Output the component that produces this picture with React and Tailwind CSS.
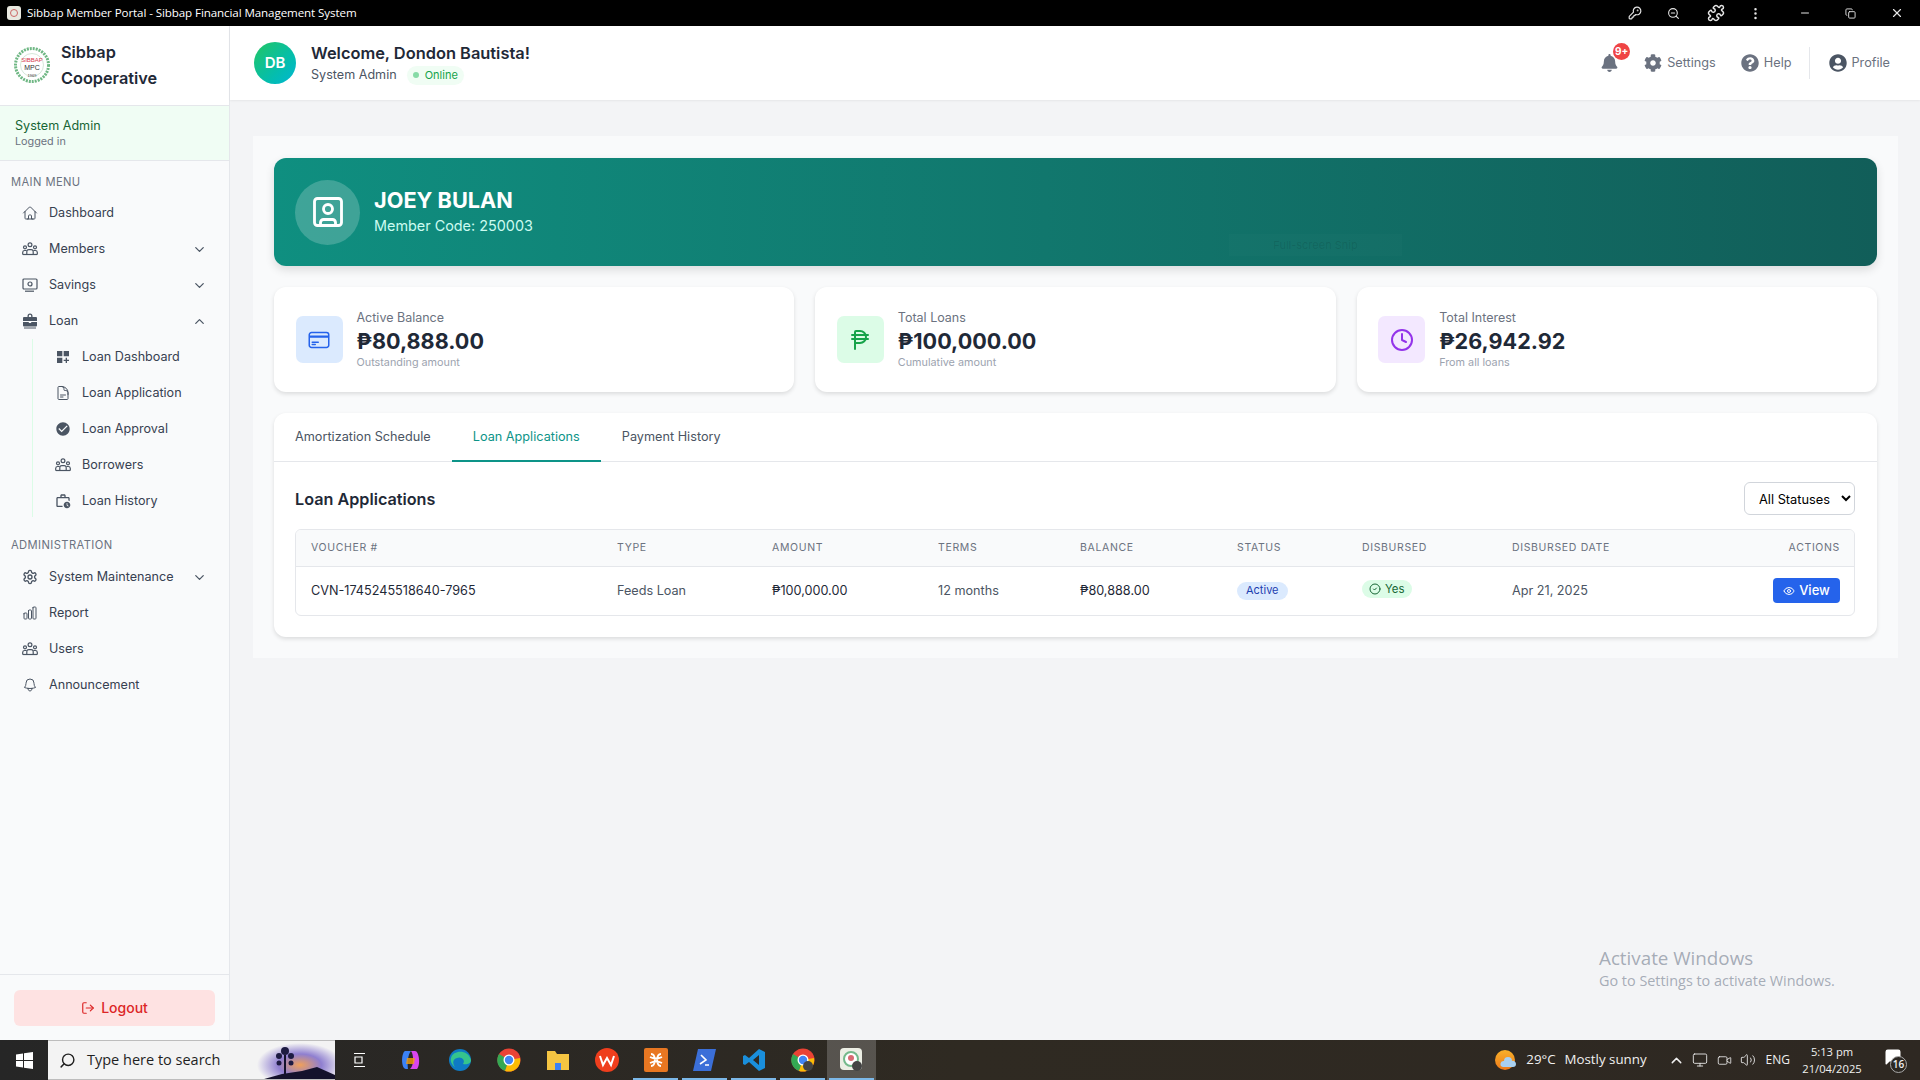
import React from "react";
import { HiOutlineHome, HiOutlineDocumentText, HiOutlineChartBar, HiOutlineBell, HiOutlineCreditCard } from "react-icons/hi2";
import { MdDashboardCustomize, MdCheckCircle, MdOutlineWorkHistory } from "react-icons/md";
import { FaBell, FaCog, FaQuestionCircle, FaUserCircle } from "react-icons/fa";
import { LuSquareUser, LuPhilippinePeso, LuClock, LuCircleCheck, LuEye, LuLogOut, LuChevronDown, LuChevronUp, LuSettings, LuSearch, LuKeyRound, LuZoomOut, LuPuzzle, LuMinus, LuX, LuCopy, LuEllipsisVertical, LuMonitor, LuVideo, LuVolume2, LuMessageSquare } from "react-icons/lu";

function Logo() {
  return (
    <svg width="36" height="36" viewBox="0 0 36 36">
      <circle cx="18" cy="18" r="16.5" fill="#fff" stroke="#6fb784" strokeWidth="3" strokeDasharray="2 1" />
      <circle cx="18" cy="18" r="11.5" fill="#fff" stroke="#b9d6bf" strokeWidth="0.6" />
      <text x="18" y="15" textAnchor="middle" fontSize="6" fill="#d63a4a" fontFamily="Liberation Sans">SIBBAP</text>
      <text x="18" y="23" textAnchor="middle" fontSize="7" fill="#333" fontFamily="Liberation Sans">MPC</text>
      <text x="18" y="30" textAnchor="middle" fontSize="4" fill="#333" fontFamily="Liberation Sans">1969</text>
    </svg>
  );
}

function GroupIcon({ className }) {
  return (
    <svg className={className} viewBox="0 0 16 16" fill="none" stroke="currentColor" strokeWidth="1.200">
      <circle cx="8" cy="3.800" r="1.900" />
      <circle cx="3" cy="6.300" r="1.500" />
      <circle cx="13" cy="6.300" r="1.500" />
      <path d="M4.800 13.500V10.500a2 2 0 0 1 2-1.800h2.400a2 2 0 0 1 2 1.800v3" />
      <path d="M0.700 13.500v-2.200a2 2 0 0 1 2-1.800h2M15.300 13.500v-2.200a2 2 0 0 0-2-1.800h-2" />
      <path d="M0.700 13.500h14.600" />
    </svg>
  );
}

function SavingsIcon({ className }) {
  return (
    <svg className={className} viewBox="0 0 16 16" fill="none" stroke="currentColor" strokeWidth="1.200">
      <rect x="1" y="2" width="14" height="10" rx="1" />
      <circle cx="8" cy="7" r="2" />
      <path d="M3 14.200h9" />
    </svg>
  );
}

function LoanIcon({ className }) {
  return (
    <svg className={className} viewBox="0 0 16 16" fill="currentColor">
      <path d="M5.500 4V3a2.500 2.500 0 0 1 5 0v1H14a1 1 0 0 1 1 1v3H1V5a1 1 0 0 1 1-1zm1.300 0h2.400V3a1.200 1.200 0 0 0-2.400 0z" />
      <path d="M1 9h5.800v1h2.400V9H15v3.500a1 1 0 0 1-1 1H2a1 1 0 0 1-1-1z" />
      <path d="M2 14.500h12v1H2z" />
    </svg>
  );
}

function MenuRow({ icon: I, label, chevron, sub }) {
  return (
    <div className={`flex h-9 items-center ${sub ? "pl-[55px]" : "pl-[22px]"} pr-[22px] text-[12.6px] text-[#374151]`}>
      <I className="w-[16px] h-[16px] shrink-0 text-[#4b5563]" />
      <span className="ml-[11px] flex-1">{label}</span>
      {chevron === "down" && <LuChevronDown className="w-[15px] h-[15px] text-[#4b5563]" />}
      {chevron === "up" && <LuChevronUp className="w-[15px] h-[15px] text-[#4b5563]" />}
    </div>
  );
}

function Sidebar() {
  return (
    <aside className="w-[230px] shrink-0 flex flex-col bg-[#f9fafb] border-r border-[#e5e7eb]">
      <div className="h-[80px] bg-white flex items-center pl-[14px] gap-[11px] border-b border-[#e5e7eb] pb-[2px]">
        <Logo />
        <div className="text-[16.3px] leading-[26px] font-semibold text-[#1f2937]">Sibbap<br />Cooperative</div>
      </div>
      <div className="h-[55px] bg-[#f0fdf4] border-b border-[#e5e7eb] pl-[15px] pt-[12px]">
        <div className="text-[12.6px] leading-[16px] text-[#166534]">System Admin</div>
        <div className="text-[10.8px] leading-[15px] text-[#6b7280]">Logged in</div>
      </div>
      <div className="pl-[11px] mt-[13px] h-[16px] text-[11.2px] leading-[16px] tracking-[0.4px] text-[#6b7280]">MAIN MENU</div>
      <div className="mt-[5px]">
        <MenuRow icon={HiOutlineHome} label="Dashboard" />
        <MenuRow icon={GroupIcon} label="Members" chevron="down" />
        <MenuRow icon={SavingsIcon} label="Savings" chevron="down" />
        <MenuRow icon={LoanIcon} label="Loan" chevron="up" />
        <div className="relative">
          <div className="absolute left-[32px] top-0 bottom-[2px] w-px bg-[#dcfce7]" />
          <MenuRow sub icon={MdDashboardCustomize} label="Loan Dashboard" />
          <MenuRow sub icon={HiOutlineDocumentText} label="Loan Application" />
          <MenuRow sub icon={MdCheckCircle} label="Loan Approval" />
          <MenuRow sub icon={GroupIcon} label="Borrowers" />
          <MenuRow sub icon={MdOutlineWorkHistory} label="Loan History" />
        </div>
      </div>
      <div className="pl-[11px] mt-[18px] h-[16px] text-[11.2px] leading-[16px] tracking-[0.4px] text-[#6b7280]">ADMINISTRATION</div>
      <div className="mt-[6px]">
        <MenuRow icon={LuSettings} label="System Maintenance" chevron="down" />
        <MenuRow icon={HiOutlineChartBar} label="Report" />
        <MenuRow icon={GroupIcon} label="Users" />
        <MenuRow icon={HiOutlineBell} label="Announcement" />
      </div>
      <div className="mt-auto h-[66px] border-t border-[#e5e7eb] px-[14px] pt-[15px]">
        <div className="h-[36px] w-[201px] rounded-[6px] bg-[#fee2e2] text-[#dc2626] text-[14px] font-medium flex items-center justify-center gap-[6px] pb-[1px]">
          <LuLogOut className="w-[14px] h-[14px]" />
          Logout
        </div>
      </div>
    </aside>
  );
}

function Header() {
  return (
    <header className="h-[74px] shrink-0 bg-white flex items-center pl-[24px] pr-[30px] shadow-[0_1px_2px_rgba(0,0,0,0.06)] relative">
      <div className="w-[42px] h-[42px] rounded-full bg-gradient-to-br from-[#22c55e] to-[#06b6d4] text-white font-semibold text-[15px] flex items-center justify-center">DB</div>
      <div className="ml-[15px]">
        <div className="text-[16.4px] leading-[24px] font-semibold text-[#1f2937]">Welcome, Dondon Bautista!</div>
        <div className="flex items-center h-[20px]">
          <span className="text-[12.6px] text-[#4b5563]">System Admin</span>
          <span className="ml-[10px] h-[19px] px-[6px] rounded-full bg-[#f0fdf4] text-[#16a34a] text-[11px] flex items-center gap-[6px]">
            <span className="w-[6px] h-[6px] rounded-full bg-[#86dba6]" />Online
          </span>
        </div>
      </div>
      <div className="ml-auto flex items-center text-[12.7px] text-[#6b7280]">
        <div className="relative mr-[26px]">
          <FaBell className="w-[17px] h-[18px] text-[#6b7280]" />
          <span className="absolute -top-[11px] left-[12px] w-[17px] h-[17px] rounded-full bg-[#ef4444] text-white text-[10px] font-bold flex items-center justify-center">9+</span>
        </div>
        <FaCog className="w-[18px] h-[18px]" />
        <span className="ml-[5px]">Settings</span>
        <FaQuestionCircle className="w-[18px] h-[18px] ml-[25px]" />
        <span className="ml-[5px]">Help</span>
        <div className="w-px h-[32px] bg-[#e5e7eb] ml-[18px] mr-[19px]" />
        <FaUserCircle className="w-[18px] h-[18px] text-[#4b5563]" />
        <span className="ml-[4px]">Profile</span>
      </div>
    </header>
  );
}

function Stat({ icon: I, bg, fg, label, value, sub }) {
  return (
    <div className="flex-1 h-[105px] bg-white rounded-[12px] shadow-[0_2px_4px_rgba(0,0,0,0.12)] flex items-center pl-[21.5px]">
      <div className={`w-[47px] h-[47px] rounded-[7px] ${bg} flex items-center justify-center`}>
        <I className={`w-[24px] h-[24px] ${fg}`} />
      </div>
      <div className="ml-[14px]">
        <div className="text-[12.5px] leading-[15px] text-[#6b7280]">{label}</div>
        <div className="mt-[1px] text-[21.6px] leading-[30px] font-bold text-[#1f2937]">{value}</div>
        <div className="text-[10.8px] leading-[13px] text-[#9ca3af]">{sub}</div>
      </div>
    </div>
  );
}

const Th = ({ children, w, right }) => (
  <th className={`${w} ${right ? "pl-[15px] pr-[14px] text-right" : "px-[15px] text-left"} h-[36px] text-[10.5px] font-normal tracking-[0.65px] text-[#6b7280]`}>{children}</th>
);

function Content() {
  return (
    <main className="flex-1 flex flex-col bg-[#f3f4f6] min-w-0">
      <Header />
      <div className="mt-[36px] ml-[23px] mr-[22px] bg-[#f9fafb] p-[21px] pt-[22px]">
        <div className="relative h-[108px] rounded-[12px] bg-gradient-to-r from-[#0f8f80] to-[#115e59] shadow-[0_4px_10px_rgba(0,0,0,0.12)] flex items-center pl-[21px]">
          <div className="w-[65px] h-[65px] rounded-full bg-white/20 flex items-center justify-center">
            <LuSquareUser className="w-[36px] h-[36px] text-white" strokeWidth={1.9} />
          </div>
          <div className="ml-[14px] -mt-[3px]">
            <div className="text-[21.7px] leading-[29px] font-bold text-white">JOEY BULAN</div>
            <div className="mt-[1px] text-[14.4px] leading-[20px] text-[#ccfbf1]">Member Code: 250003</div>
          </div>
          <div className="absolute left-[955px] top-[76px] w-[173px] h-[22px] bg-white/[0.015] text-[11px] text-black/10 flex items-center justify-center">Full-screen Snip</div>
        </div>
        <div className="flex gap-[21px] mt-[21px]">
          <Stat icon={HiOutlineCreditCard} bg="bg-[#dbeafe]" fg="text-[#2563eb]" label="Active Balance" value="₱80,888.00" sub="Outstanding amount" />
          <Stat icon={LuPhilippinePeso} bg="bg-[#dcfce7]" fg="text-[#16a34a]" label="Total Loans" value="₱100,000.00" sub="Cumulative amount" />
          <Stat icon={LuClock} bg="bg-[#f3e8ff]" fg="text-[#9333ea]" label="Total Interest" value="₱26,942.92" sub="From all loans" />
        </div>
        <div className="mt-[21px] bg-white rounded-[12px] shadow-[0_2px_4px_rgba(0,0,0,0.12)]">
          <div className="flex h-[49px] border-b border-[#e5e7eb] text-[12.7px] text-[#4b5563]">
            <div className="px-[21px] flex items-center">Amortization Schedule</div>
            <div className="px-[21px] flex items-center text-[#0d9488] border-b-2 border-[#0d9488] h-[49px]">Loan Applications</div>
            <div className="px-[21px] flex items-center">Payment History</div>
          </div>
          <div className="px-[21px] pt-[20px] pb-[21px]">
            <div className="flex items-center justify-between h-[33px]">
              <div className="pt-[1px] text-[16.2px] font-semibold text-[#1f2937]">Loan Applications</div>
              <select className="w-[111px] h-[33px] -translate-x-[1px] rounded-[6px] border border-[#d1d5db] bg-white pl-[10px] pt-[1px] text-[12.8px] text-black">
                <option>All Statuses</option>
              </select>
            </div>
            <div className="mt-[14px] border border-[#e5e7eb] rounded-[6px] overflow-hidden w-[1560px]">
              <table className="w-full table-fixed border-collapse">
                <thead className="bg-[#f9fafb] border-b border-[#e5e7eb]">
                  <tr>
                    <Th w="w-[306px]">VOUCHER #</Th>
                    <Th w="w-[155px]">TYPE</Th>
                    <Th w="w-[166px]">AMOUNT</Th>
                    <Th w="w-[142px]">TERMS</Th>
                    <Th w="w-[157px]">BALANCE</Th>
                    <Th w="w-[125px]">STATUS</Th>
                    <Th w="w-[150px]">DISBURSED</Th>
                    <Th w="w-[190px]">DISBURSED DATE</Th>
                    <Th right>ACTIONS</Th>
                  </tr>
                </thead>
                <tbody>
                  <tr className="h-[49px] text-[12.65px]">
                    <td className="px-[15px] pt-[1px] text-[#1f2937]">CVN-1745245518640-7965</td>
                    <td className="px-[15px] pt-[1px] text-[#4b5563]">Feeds Loan</td>
                    <td className="px-[15px] pt-[1px] text-[#1f2937]">₱100,000.00</td>
                    <td className="px-[15px] pt-[1px] text-[#4b5563]">12 months</td>
                    <td className="px-[15px] pt-[1px] text-[#1f2937]">₱80,888.00</td>
                    <td className="px-[15px]">
                      <span className="inline-flex h-[18px] items-center px-[9px] rounded-full bg-[#dbeafe] text-[#1e40af] text-[11px]">Active</span>
                    </td>
                    <td className="px-[15px]">
                      <span className="inline-flex h-[18px] items-center gap-[4px] px-[7px] rounded-full bg-[#dcfce7] text-[#166534] text-[11.4px]">
                        <LuCircleCheck className="w-[12px] h-[12px]" />Yes
                      </span>
                    </td>
                    <td className="px-[15px] pt-[1px] text-[#4b5563]">Apr 21, 2025</td>
                    <td className="pl-[15px] pr-[14px] text-right">
                      <span className="inline-flex h-[25px] w-[67px] items-center justify-center gap-[4px] rounded-[4px] bg-[#2563eb] text-white text-[13px] font-medium">
                        <LuEye className="w-[12px] h-[12px]" />View
                      </span>
                    </td>
                  </tr>
                </tbody>
              </table>
            </div>
          </div>
        </div>
      </div>
    </main>
  );
}

function TitleBar() {
  return (
    <div className="h-[26px] shrink-0 bg-black flex items-center text-white font-['Open_Sans',sans-serif]">
      <div className="ml-[7px] w-[14px] h-[14px] rounded-[3px] bg-[#e8e8e0] flex items-center justify-center">
        <div className="w-[8px] h-[8px] rounded-full border border-[#c66]" />
      </div>
      <span className="ml-[6px] text-[11.6px] tracking-[-0.1px]">Sibbap Member Portal - Sibbap Financial Management System</span>
      <div className="ml-auto flex items-center text-[#e5e5e5]">
        <LuKeyRound className="w-[14px] h-[14px] mr-[25px]" />
        <LuZoomOut className="w-[13px] h-[13px] mr-[27px]" />
        <LuPuzzle className="w-[18px] h-[18px] mr-[23px]" />
        <LuEllipsisVertical className="w-[15px] h-[15px] mr-[36px]" />
        <LuMinus className="w-[12px] h-[12px] mr-[34px]" />
        <LuCopy className="w-[11px] h-[11px] mr-[34px]" />
        <LuX className="w-[14px] h-[14px] mr-[16px]" />
      </div>
    </div>
  );
}

const TaskIcon = ({ children, active, bright }) => (
  <div className={`relative w-[49px] h-[40px] flex items-center justify-center ${bright ? "bg-white/20" : ""}`}>
    {children}
    {active && <div className="absolute bottom-0 left-[2px] right-[2px] h-[2px] bg-[#7cb8e8]" />}
  </div>
);

function Taskbar() {
  return (
    <div className="h-[40px] shrink-0 bg-gradient-to-r from-[#262626] via-[#2f2a22] to-[#2e2822] flex items-center text-white font-['Open_Sans',sans-serif] relative">
      <div className="w-[48px] flex items-center justify-center">
        <svg width="17" height="17" viewBox="0 0 17 17" fill="#fff">
          <path d="M0 2.400 7 1.400V8H0zM8 1.200 17 0V8H8zM0 9h7v6.600l-7-1zM8 9h9v8l-9-1.200z" />
        </svg>
      </div>
      <div className="relative w-[287px] h-[40px] bg-[#f3f3f3] border-y border-[#bdbdbd] flex items-center pl-[11px] text-[#1f1f1f] overflow-hidden">
        <LuSearch className="w-[17px] h-[17px] -scale-x-100" />
        <span className="ml-[11px] text-[14.5px]">Type here to search</span>
        <svg className="absolute right-0 top-0" width="78" height="40" viewBox="0 0 78 40">
          <defs>
            <radialGradient id="gl" cx="0.55" cy="0.6" r="0.55">
              <stop offset="0" stopColor="#f0a05a" />
              <stop offset="0.5" stopColor="#8f7fd0" />
              <stop offset="1" stopColor="#f3f3f3" />
            </radialGradient>
          </defs>
          <rect width="78" height="40" fill="url(#gl)" />
          <path d="M0 40 25 33 45 30 60 26 78 34V40z" fill="#14122c" />
          <path d="M28 33 V14" stroke="#14122c" strokeWidth="2" />
          <circle cx="28" cy="10" r="4" fill="#1d1b42" /><circle cx="22" cy="15" r="3" fill="#1d1b42" /><circle cx="34" cy="15" r="3" fill="#1d1b42" /><circle cx="22" cy="22" r="2.500" fill="#1d1b42" /><circle cx="34" cy="22" r="2.500" fill="#1d1b42" />
        </svg>
      </div>
      <div className="ml-[15px] w-[22px] flex justify-center">
        <svg width="15" height="16" viewBox="0 0 15 16" fill="none" stroke="#fff" strokeWidth="1.200">
          <path d="M0 1.500h11M0 14.500h11M1 5h7v6H1zM13 5v.1M13 10v.1" />
        </svg>
      </div>
      <div className="ml-[14px] flex">
        <TaskIcon>
          <svg width="22" height="22" viewBox="0 0 22 22"><path d="M5 2h6c-3 3-4 12-3 18H6C1 20 1 4 5 2z" fill="#3b82f6" /><path d="M11 2h4c4 0 6 14 2 18h-7c4-3 4-14 1-18z" fill="#d946ef" /><path d="M7 9h8l-1 6H6z" fill="#f59e0b" opacity=".8" /></svg>
        </TaskIcon>
        <TaskIcon>
          <svg width="24" height="24" viewBox="0 0 24 24"><circle cx="12" cy="12" r="11" fill="#0e7ac4" /><path d="M3 10C5 2 20 1 23 12c0 4-5 5-8 4 3-4-2-8-6-6-4 1-5 5-2 9-3-2-5-6-4-9z" fill="#35c48d" /></svg>
        </TaskIcon>
        <TaskIcon>
          <svg width="24" height="24" viewBox="0 0 24 24"><circle cx="12" cy="12" r="11.500" fill="#ea4335" /><path d="M12 12 2 6A11.500 11.500 0 0 0 8 23z" fill="#34a853" /><path d="M12 12 8 23A11.500 11.500 0 0 0 23 10z" fill="#fbbc05" /><circle cx="12" cy="12" r="5.500" fill="#fff" /><circle cx="12" cy="12" r="4.200" fill="#4285f4" /></svg>
        </TaskIcon>
        <TaskIcon>
          <svg width="22" height="20" viewBox="0 0 22 20"><path d="M0 1h8l2 3h12v16H0z" fill="#f5c542" /><rect x="8" y="13" width="6" height="7" fill="#3b82f6" /></svg>
        </TaskIcon>
        <TaskIcon>
          <svg width="24" height="24" viewBox="0 0 24 24"><circle cx="12" cy="12" r="12" fill="#ef3e1d" /><path d="M5 8l3 9 4-7 4 7 3-9" fill="none" stroke="#fff" strokeWidth="2" /></svg>
        </TaskIcon>
        <TaskIcon active>
          <svg width="24" height="24" viewBox="0 0 24 24"><rect width="24" height="24" rx="2" fill="#e87722" /><path d="M7 6c5 0 5 12 0 12M17 6c-5 0-5 12 0 12M6 9c4 2 8 2 12 0M6 15c4-2 8-2 12 0" fill="none" stroke="#fff" strokeWidth="1.800" /></svg>
        </TaskIcon>
        <TaskIcon active>
          <svg width="24" height="24" viewBox="0 0 24 24"><path d="M5 1h18l-5 22H0z" fill="#3b6fd8" /><path d="M8 7l5 5-6 4M12 17h4" fill="none" stroke="#fff" strokeWidth="1.600" /></svg>
        </TaskIcon>
        <TaskIcon active>
          <svg width="24" height="24" viewBox="0 0 24 24"><path d="M17 1l6 3v16l-6 3-10-9-4 3-2-1V8l2-1 4 3zM17 7l-6 5 6 5z" fill="#1a8fdc" /></svg>
        </TaskIcon>
        <TaskIcon active>
          <svg width="24" height="24" viewBox="0 0 24 24"><circle cx="12" cy="12" r="11.500" fill="#ea4335" /><path d="M12 12 2 6A11.500 11.500 0 0 0 8 23z" fill="#34a853" /><path d="M12 12 8 23A11.500 11.500 0 0 0 23 10z" fill="#fbbc05" /><circle cx="12" cy="12" r="5.500" fill="#fff" /><circle cx="12" cy="12" r="4.200" fill="#4285f4" /><circle cx="17" cy="18" r="5" fill="#444" /></svg>
        </TaskIcon>
        <TaskIcon active bright>
          <svg width="24" height="26" viewBox="0 0 24 26"><rect y="1" width="22" height="22" rx="4" fill="#eceee4" /><circle cx="11" cy="12" r="7" fill="#fff" stroke="#74b98b" strokeWidth="2" /><circle cx="11" cy="11" r="3" fill="#d96a72" /><circle cx="17" cy="19" r="5" fill="#444" /></svg>
        </TaskIcon>
      </div>
      <div className="ml-auto flex items-center text-[13.3px] text-[#f0f0f0]">
        <svg width="22" height="22" viewBox="0 0 22 22"><defs><linearGradient id="sun" x1="0" y1="0" x2="0" y2="1"><stop offset="0" stopColor="#f8b02a" /><stop offset="1" stopColor="#ee7a1a" /></linearGradient></defs><circle cx="10" cy="11" r="10" fill="url(#sun)" /><path d="M8 18a3 3 0 0 1 1-6 4 4 0 0 1 8 0 3 3 0 0 1 4 3 3 3 0 0 1-3 3z" fill="#a8d0f0" /></svg>
        <span className="ml-[9px]">29°C</span>
        <span className="ml-[9px]">Mostly sunny</span>
        <LuChevronUp className="ml-[21px] w-[17px] h-[17px]" />
        <LuMonitor className="ml-[7px] w-[16px] h-[16px]" strokeWidth={1.3} />
        <LuVideo className="ml-[9px] w-[15px] h-[15px]" strokeWidth={1.3} />
        <LuVolume2 className="ml-[8px] w-[16px] h-[16px]" strokeWidth={1.3} />
        <span className="ml-[10px] text-[12px]">ENG</span>
        <div className="ml-[12px] w-[60px] text-center text-[11.2px] leading-[17px]">5:13 pm<br />21/04/2025</div>
        <div className="relative ml-[22px] mr-[14px] w-[22px] h-[24px]">
          <LuMessageSquare className="w-[18px] h-[18px] fill-white text-white" />
          <span className="absolute left-[6px] top-[8px] w-[17px] h-[17px] rounded-full bg-[#2b2722] border border-[#aaa] text-[10px] font-semibold flex items-center justify-center">16</span>
        </div>
      </div>
    </div>
  );
}

export default function App() {
  return (
    <div className="relative w-[1920px] h-[1080px] overflow-hidden flex flex-col font-['Inter',sans-serif] bg-[#f3f4f6]">
      <TitleBar />
      <div className="flex-1 flex min-h-0">
        <Sidebar />
        <Content />
      </div>
      <Taskbar />
      <div className="absolute left-[1599px] top-[945px] font-['Open_Sans',sans-serif] text-[#9ca3af]/90">
        <div className="text-[18.8px] leading-[26px]">Activate Windows</div>
        <div className="text-[14.4px] leading-[20px]">Go to Settings to activate Windows.</div>
      </div>
    </div>
  );
}
